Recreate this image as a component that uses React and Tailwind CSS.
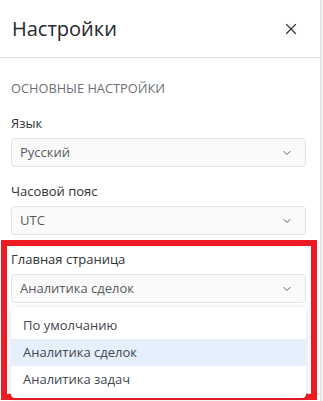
import { X, ChevronDown } from "lucide-react";

const font = { fontFamily: '"Open Sans", "Noto Sans", sans-serif' };

function Select({ value }) {
  return (
    <div className="flex h-[29px] items-center justify-between rounded-[4px] border border-[#e3e3e6] bg-[#fafafa] pl-[8px] pr-[12px]">
      <span className="text-[13px] text-[#555a60]">{value}</span>
      <ChevronDown size={12} strokeWidth={2} className="text-[#555a60]" />
    </div>
  );
}

function Field({ label, value }) {
  return (
    <div className="mb-[15px]">
      <div className="mb-[6px] text-[13px] leading-[18px] font-medium text-[#2f3338]">{label}</div>
      <Select value={value} />
    </div>
  );
}

export default function App() {
  const options = ["По умолчанию", "Аналитика сделок", "Аналитика задач"];
  const active = "Аналитика сделок";

  return (
    <div className="relative flex h-[401px] w-[323px] overflow-hidden bg-[#f1f1f3]" style={font}>
      <div className="flex w-[321px] flex-col border-r border-[#dedee2] bg-white">
        <div className="flex h-[58px] items-center justify-between border-b border-[#dcdce0] pl-[12px] pr-[20px]">
          <span className="text-[20px] font-medium text-[#25282c]">Настройки</span>
          <X size={18} strokeWidth={1.6} className="text-[#2f3338]" />
        </div>

        <div className="flex-1 pt-[22px] pl-[11px] pr-[14px]">
          <div className="mb-[18px] text-[12.8px] leading-4 font-medium text-[#6b7079] uppercase">Основные настройки</div>
          <Field label="Язык" value="Русский" />
          <Field label="Часовой пояс" value="UTC" />
          <div className="relative">
            <Field label="Главная страница" value={active} />
            <div className="absolute top-[57px] right-0 left-0 z-10 rounded-[4px] bg-white pt-[5px] pb-[5px] shadow-[0_1px_6px_rgba(0,0,0,0.14)]">
              {options.map((o) => (
                <div
                  key={o}
                  className={`flex h-[27px] items-center pl-[12px] text-[13px] text-[#43474d] ${o === active ? "bg-[#e6effc]" : ""}`}
                >
                  {o}
                </div>
              ))}
            </div>
          </div>
        </div>

        <div className="h-[8px] border-t border-[#dcdce0]"></div>
      </div>

      <div className="pointer-events-none absolute top-[240px] left-[1px] h-[160px] w-[316px] border-[6px] border-[#ed1c24]"></div>
    </div>
  );
}
